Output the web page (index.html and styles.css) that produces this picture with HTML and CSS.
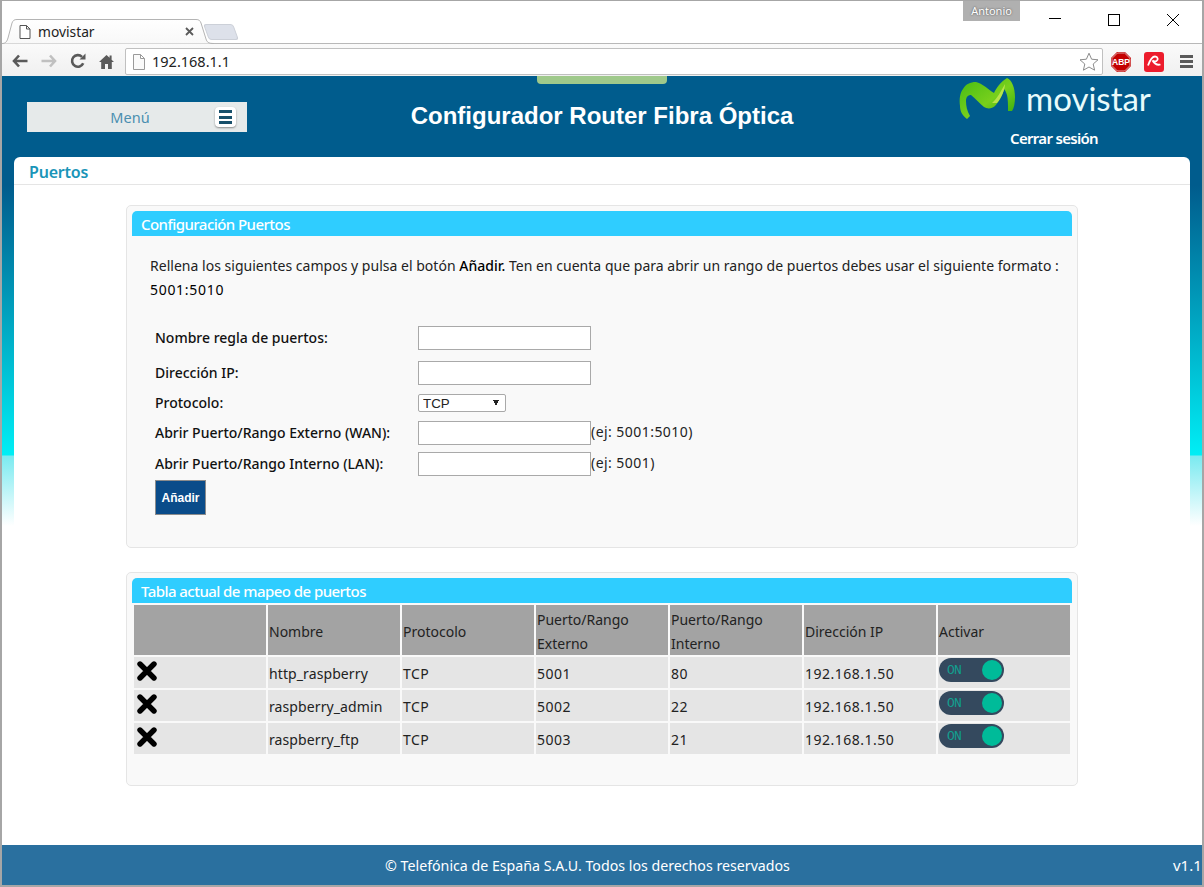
FILE: index.html
```html
<!DOCTYPE html>
<html lang="es">
    <head>
        <meta charset="UTF-8">
        <title>movistar</title>
        <link rel="stylesheet" href="styles.css">
    </head>
    <body>
        <div class="tabstrip">
            <div class="tab">
                <svg class="tab-shape" width="212" height="25" viewBox="0 0 212 25">
                    <defs>
                        <linearGradient id="tabfill" x1="0" y1="0" x2="0" y2="1">
                            <stop offset="0" stop-color="#ffffff"/>
                            <stop offset="1" stop-color="#f8f8f8"/>
                        </linearGradient>
                    </defs>
                    <path d="M0 24.5 C4 24.5 5 22 6 19 L10 4 C11 1.5 12 .5 15 .5 L194 .5 C197 .5 198 1.5 199 4 L204 20 C205 23 206 24.5 212 24.5" fill="url(#tabfill)" stroke="#b4b4b4"/>
                </svg>
                <svg class="tab-page" width="12" height="14" viewBox="0 0 12 14">
                    <path d="M1 .5H7.5L11 4V13.5H1Z M7.5 .5V4H11" fill="#fff" stroke="#555"/>
                </svg>
                <span class="tab-title">movistar</span>
                <svg class="tab-close" width="9" height="9" viewBox="0 0 9 9">
                    <path d="M1 1L8 8M8 1L1 8" stroke="#5a5a5a" stroke-width="1.8"/>
                </svg>
            </div>
            <div class="newtab"></div>
            <div class="profile">Antonio</div>
            <div class="winbtns">
                <svg width="14" height="14" viewBox="0 0 14 14"><path d="M1 5.5H13" stroke="#000"/></svg>
                <svg width="14" height="14" viewBox="0 0 14 14"><rect x="1.5" y="1.5" width="11" height="11" fill="none" stroke="#000"/></svg>
                <svg width="14" height="14" viewBox="0 0 14 14"><path d="M1 1L13 13M13 1L1 13" stroke="#000"/></svg>
            </div>
        </div>

        <div class="toolbar">
            <svg class="nav-icon" width="16" height="14" viewBox="0 0 16 14"><path d="M7 1.5L2 7L7 12.5M2.5 7H15.5" fill="none" stroke="#5a5a5a" stroke-width="2.6"/></svg>
            <svg class="nav-icon" width="16" height="14" viewBox="0 0 16 14"><path d="M9 1.5L14 7L9 12.5M13.5 7H.5" fill="none" stroke="#c0c0c0" stroke-width="2.6"/></svg>
            <svg class="nav-icon" width="16" height="16" viewBox="0 0 16 16"><path d="M13.2 10.2A5.8 5.8 0 1 1 12 3.8" fill="none" stroke="#5a5a5a" stroke-width="2.6"/><path d="M9.5 6.5H15.5V.5Z" fill="#5a5a5a"/></svg>
            <svg class="nav-icon" width="15" height="15" viewBox="0 0 15 15"><path d="M7.5 1L0 8H2.2V15H6V10H9V15H12.8V8H15L12.6 5.7V1.5H10.6V3.8Z" fill="#5a5a5a"/></svg>
            <div class="omnibox">
                <svg class="omni-page" width="12" height="16" viewBox="0 0 12 16"><path d="M.5 .5H7.5L11.5 4.5V15.5H.5Z M7.5 .5V4.5H11.5" fill="#fafafa" stroke="#9a9a9a"/></svg>
                <span class="url">192.168.1.1</span>
                <svg class="star" width="20" height="19" viewBox="0 0 20 19"><path d="M10 1.2L12.6 7.2L19 7.8L14.2 12L15.6 18.2L10 15L4.4 18.2L5.8 12L1 7.8L7.4 7.2Z" fill="#fff" stroke="#8c8c8c"/></svg>
            </div>
            <svg class="ext" width="20" height="20" viewBox="0 0 20 20">
                <path d="M6 0H14L20 6V14L14 20H6L0 14V6Z" fill="#c40000"/>
                <path d="M6.4 1H13.6L19 6.4V13.6L13.6 19H6.4L1 13.6V6.4Z" fill="#c40000" stroke="#e8e8e8" stroke-width=".7"/>
                <text x="10" y="13" class="abp">ABP</text>
            </svg>
            <svg class="ext" width="20" height="20" viewBox="0 0 20 20">
                <rect width="20" height="20" rx="3" fill="#ec1c2c"/>
                <path d="M4 13.5C6 8 8 4.5 11 4.5C14 4.5 14.5 8 12.5 9C11 9.8 9.5 9.5 8.5 8.5C10 11 13 13.5 16.5 12.5" fill="none" stroke="#fff" stroke-width="1.8"/>
            </svg>
            <div class="chrome-menu"><i></i><i></i><i></i></div>
        </div>

        <div class="page">
            <header class="top">
                <div class="top-tab"></div>
                <div class="menu">
                    <span class="menu-label">Menú</span>
                    <span class="menu-btn"><i></i><i></i><i></i></span>
                </div>
                <h1>Configurador Router Fibra Óptica</h1>
                <div class="brand">
                    <div class="logo">
                        <svg width="62" height="44" viewBox="0 0 62 44">
                            <defs>
                                <linearGradient id="mgreen" x1="0" y1="0" x2="1" y2="1">
                                    <stop offset="0" stop-color="#45bb14"/>
                                    <stop offset=".55" stop-color="#78d01c"/>
                                    <stop offset="1" stop-color="#2fa80c"/>
                                </linearGradient>
                            </defs>
                            <path d="M9 42C4 38 2 34 2 29C1 22 2 16 5 12C8 7 12 5 18 5C24 6 31 13 36 16C38 12 42 5 49 1C54 3 57 11 57 20C57 26 56 31 54 34L50 34C50 28 50 22 49 18C48 15 47 13 46 12C45 17 41 25 37 29C34 32 29 32 26 30C22 27 17 21 13 18C10 18 8 20 8 24C8 29 9 34 12 39Z" fill="url(#mgreen)"/>
                            <path d="M34 26C39 22 43 14 47 7C47 12 44 20 39 26Z" fill="#b8e34a"/>
                        </svg>
                        <span class="wordmark">movistar</span>
                    </div>
                    <a class="logout">Cerrar sesión</a>
                </div>
            </header>

            <main class="content">
                <h2 class="page-title">Puertos</h2>

                <section class="card card-form">
                    <h3 class="card-title">Configuración Puertos</h3>
                    <p class="intro">Rellena los siguientes campos y pulsa el botón <b>Añadir.</b> Ten en cuenta que para abrir un rango de puertos debes usar el siguiente formato :<br><b class="plain">5001:5010</b></p>
                    <form class="port-form">
                        <label class="tall">Nombre regla de puertos:</label>
                        <div><input type="text"></div>
                        <label class="tall">Dirección IP:</label>
                        <div><input type="text"></div>
                        <label class="short">Protocolo:</label>
                        <div>
                            <select>
                                <option>TCP</option>
                                <option>UDP</option>
                            </select>
                        </div>
                        <label class="tall">Abrir Puerto/Rango Externo (WAN):</label>
                        <div class="with-hint"><input type="text"><span>(ej: 5001:5010)</span></div>
                        <label class="tall">Abrir Puerto/Rango Interno (LAN):</label>
                        <div class="with-hint"><input type="text"><span>(ej: 5001)</span></div>
                        <input class="add" type="button" value="Añadir">
                    </form>
                </section>

                <section class="card card-table">
                    <h3 class="card-title">Tabla actual de mapeo de puertos</h3>
                    <table class="ports">
                        <thead>
                            <tr>
                                <th></th>
                                <th>Nombre</th>
                                <th>Protocolo</th>
                                <th>Puerto/Rango Externo</th>
                                <th>Puerto/Rango Interno</th>
                                <th>Dirección IP</th>
                                <th>Activar</th>
                            </tr>
                        </thead>
                        <tbody>
                            <tr>
                                <td class="cell-top"><svg class="del" width="20" height="20" viewBox="0 0 20 20"><path d="M3 3L17 17M17 3L3 17" stroke="#000" stroke-width="5.4" stroke-linecap="round"/></svg></td>
                                <td>http_raspberry</td>
                                <td>TCP</td>
                                <td>5001</td>
                                <td>80</td>
                                <td>192.168.1.50</td>
                                <td class="cell-top"><span class="toggle"><span class="toggle-on">ON</span><i></i></span></td>
                            </tr>
                            <tr>
                                <td class="cell-top"><svg class="del" width="20" height="20" viewBox="0 0 20 20"><path d="M3 3L17 17M17 3L3 17" stroke="#000" stroke-width="5.4" stroke-linecap="round"/></svg></td>
                                <td>raspberry_admin</td>
                                <td>TCP</td>
                                <td>5002</td>
                                <td>22</td>
                                <td>192.168.1.50</td>
                                <td class="cell-top"><span class="toggle"><span class="toggle-on">ON</span><i></i></span></td>
                            </tr>
                            <tr>
                                <td class="cell-top"><svg class="del" width="20" height="20" viewBox="0 0 20 20"><path d="M3 3L17 17M17 3L3 17" stroke="#000" stroke-width="5.4" stroke-linecap="round"/></svg></td>
                                <td>raspberry_ftp</td>
                                <td>TCP</td>
                                <td>5003</td>
                                <td>21</td>
                                <td>192.168.1.50</td>
                                <td class="cell-top"><span class="toggle"><span class="toggle-on">ON</span><i></i></span></td>
                            </tr>
                        </tbody>
                    </table>
                </section>
            </main>

            <footer class="bottom">
                <span class="copy">© Telefónica de España S.A.U. Todos los derechos reservados</span>
                <span class="version">v1.1</span>
            </footer>
        </div>
    </body>
</html>
```

FILE: styles.css
```css
* {
    box-sizing: border-box;
}

html, body {
    height: 100%;
}

body {
    margin: 0;
    height: 887px;
    overflow: hidden;
    display: flex;
    flex-direction: column;
    background-color: #fff;
    border: 2px solid #a6a6a6;
    border-top-width: 1px;
    font-family: "Noto Sans", Arial, sans-serif;
    font-size: 14px;
    color: #222;
}

/* browser window */
.tabstrip {
    height: 43px;
    flex: none;
    display: flex;
    align-items: flex-end;
    border-bottom: 1px solid #b8b8b8;
    position: relative;
}

.tab {
    position: relative;
    width: 212px;
    height: 25px;
    margin-bottom: -1px;
    display: flex;
    align-items: center;
    padding: 0 20px 0 17px;
}

.tab-shape {
    position: absolute;
    left: 0;
    top: 0;
}

.tab-page, .tab-title, .tab-close {
    position: relative;
}

.tab-title {
    margin-left: 7px;
    flex: 1;
    font-size: 13.8px;
    color: #222;
}

.newtab {
    width: 30px;
    height: 16px;
    margin-left: -8px;
    margin-bottom: 3px;
    background-color: #dde1ea;
    border: 1px solid #ccd0d8;
    border-radius: 3px;
    transform: skewX(20deg);
}

.profile {
    position: absolute;
    left: 961px;
    top: 0;
    width: 57px;
    height: 20px;
    background-color: #b0b0b0;
    color: #fff;
    font-size: 11px;
    line-height: 20px;
    text-align: center;
    text-shadow: 0 0 2px #444;
}

.winbtns {
    position: absolute;
    right: 22px;
    top: 12px;
    display: flex;
    gap: 45px;
}

.toolbar {
    height: 32px;
    flex: none;
    display: flex;
    align-items: center;
    padding-left: 10px;
    background: linear-gradient(#fafafa, #f0f0f0);
}

.nav-icon {
    margin-right: 13px;
    margin-top: 2px;
}

.nav-icon:nth-child(4) {
    margin-right: 11px;
}

.omnibox {
    width: 978px;
    height: 27px;
    margin-top: 3px;
    display: flex;
    align-items: center;
    padding-left: 7px;
    background-color: #fff;
    border: 1px solid #c0c0c0;
    border-radius: 2px;
}

.url {
    margin-left: 7px;
    margin-top: -2px;
    flex: 1;
    font-size: 14.5px;
    color: #222;
}

.star {
    margin-right: 3px;
}

.toolbar > .ext {
    margin-left: 8px;
    margin-top: 3px;
}

.toolbar > .ext + .ext {
    margin-left: 13px;
}

.abp {
    font-family: "Liberation Sans", Arial, sans-serif;
    font-size: 8.5px;
    font-weight: bold;
    fill: #fff;
    text-anchor: middle;
}

.chrome-menu {
    margin-left: 16px;
    margin-top: 3px;
    width: 13px;
    display: flex;
    flex-direction: column;
    gap: 2px;
}

.chrome-menu i {
    height: 3px;
    background-color: #5a5a5a;
}

/* router page */
.page {
    flex: 1;
    display: flex;
    flex-direction: column;
    min-height: 0;
    background: linear-gradient(#005c8d 0, #005c8d 110px, #00eef5 379px, #7aeaf0 380px, #ffffff 450px);
}

.top {
    position: relative;
    height: 81px;
    flex: none;
    display: grid;
    grid-template-columns: 1fr auto 1fr;
    background-color: #005c8d;
}

.top-tab {
    position: absolute;
    left: 535px;
    top: 0;
    width: 130px;
    height: 8px;
    background-color: #9fc98b;
    border-radius: 0 0 4px 4px;
}

.menu {
    width: 220px;
    height: 30px;
    margin: 26px 0 0 25px;
    display: flex;
    align-items: center;
    background-color: #e6eaea;
}

.menu-label {
    width: 206px;
    margin-right: -18px;
    text-align: center;
    font-size: 14.5px;
    color: #4a8fb0;
}

.menu-btn {
    width: 21px;
    height: 20px;
    padding: 3px 4px;
    display: flex;
    flex-direction: column;
    justify-content: space-between;
    background-color: #fff;
    border-radius: 4px;
    box-shadow: 0 1px 2px rgba(0, 0, 0, 0.4);
}

.menu-btn i {
    height: 3px;
    background-color: #17506b;
}

.top h1 {
    margin: 25px 0 0;
    font-family: "Liberation Sans", Arial, sans-serif;
    font-size: 24px;
    line-height: 30px;
    font-weight: bold;
    color: #fff;
}

.brand {
    justify-self: end;
    width: 244px;
    padding-top: 1px;
}

.logo {
    display: flex;
    align-items: center;
    height: 44px;
}

.wordmark {
    margin-left: 6px;
    margin-top: -2px;
    font-family: Lato, sans-serif;
    font-size: 33px;
    line-height: 44px;
    color: #e8fbfb;
}

.logout {
    display: block;
    width: 192px;
    margin-top: 6px;
    text-align: center;
    font-size: 15px;
    letter-spacing: -0.7px;
    line-height: 22px;
    font-weight: 600;
    color: #fff;
}

.content {
    flex: 1;
    margin: 0 12px;
    background-color: #fff;
    border-radius: 6px 6px 0 0;
}

.page-title {
    margin: 0 0 20px;
    height: 28px;
    padding-left: 15px;
    border-bottom: 1px solid #e5e5e5;
    font-size: 16px;
    line-height: 31px;
    font-weight: 600;
    letter-spacing: -0.2px;
    color: #1a95b8;
}

.card {
    width: 952px;
    margin: 0 auto 24px;
    padding: 5px;
    background-color: #f9f9f9;
    border: 1px solid #e5e5e5;
    border-radius: 5px;
}

.card-title {
    margin: 0;
    height: 25px;
    padding-left: 9px;
    background-color: #2fcdff;
    border-radius: 5px 5px 0 0;
    font-size: 15px;
    letter-spacing: -0.55px;
    line-height: 27px;
    font-weight: 500;
    color: #fff;
}

.intro {
    margin: 18px 0 24px 18px;
    line-height: 24px;
    letter-spacing: 0.02px;
}

.intro b {
    font-weight: 500;
    color: #000;
}

.intro .plain {
    font-weight: normal;
    letter-spacing: 0.7px;
}

.port-form {
    margin-left: 23px;
    padding-bottom: 27px;
    display: grid;
    grid-template-columns: 263px 1fr;
    grid-template-rows: 35px 33px 27px 31px 28px 35px;
}

.port-form label {
    font-weight: 500;
    color: #111;
}

.tall {
    line-height: 24px;
}

.short {
    line-height: 18px;
}

.port-form input[type="text"] {
    width: 173px;
    height: 24px;
    padding: 1px 2px;
    background-color: #fff;
    border: 1px solid #a9a9a9;
}

.port-form select {
    width: 88px;
    height: 18px;
    padding: 0 4px;
    appearance: none;
    display: block;
    background-color: #fff;
    background-image: linear-gradient(to top right, transparent 50%, #222 50%), linear-gradient(to top left, transparent 50%, #222 50%);
    background-size: 3px 6px;
    background-position: 74px 5px, 77px 5px;
    background-repeat: no-repeat;
    border: 1px solid #a9a9a9;
    border-radius: 2px;
    font-family: "Liberation Sans", Arial, sans-serif;
    font-size: 13.33px;
    color: #222;
}

.with-hint {
    display: flex;
    line-height: 22px;
    letter-spacing: 0.45px;
}

.add {
    width: 51px;
    height: 35px;
    padding: 0;
    background-color: #0a4c8a;
    border: 1px solid #8c8c8c;
    font-family: "Liberation Sans", Arial, sans-serif;
    font-size: 12px;
    font-weight: bold;
    color: #fff;
}

.card-table {
    padding-bottom: 29px;
}

.ports {
    width: 940px;
    table-layout: fixed;
    border-spacing: 2px;
}

.ports th, .ports td {
    padding: 1px;
    line-height: 24px;
    text-align: left;
    font-weight: normal;
}

.ports th {
    height: 50px;
    padding-top: 3px;
    padding-bottom: 0;
    line-height: 23.5px;
    background-color: #a3a3a3;
}

.ports td {
    height: 31px;
    padding-top: 4px;
    background-color: #e5e5e5;
}

.ports td:nth-child(2) {
    letter-spacing: 0.1px;
}

.ports td:nth-child(n+3) {
    letter-spacing: 0.5px;
}

.ports td.cell-top {
    padding-top: 1px;
    vertical-align: top;
}

.del {
    display: block;
    margin: 3px 0 0 2px;
}

.toggle {
    display: block;
    position: relative;
    width: 65px;
    height: 24px;
    background-color: #34495e;
    border-radius: 12px;
}

.toggle i {
    position: absolute;
    right: 2px;
    top: 2px;
    width: 20px;
    height: 20px;
    background-color: #00bb99;
    border-radius: 50%;
}

.toggle-on {
    display: block;
    padding-left: 8px;
    font-family: "Liberation Mono", monospace;
    font-size: 13px;
    letter-spacing: -0.7px;
    line-height: 26px;
    color: #12a090;
}

.bottom {
    height: 40px;
    flex: none;
    display: flex;
    align-items: center;
    background-color: #2a709f;
    color: #fff;
}

.copy {
    flex: 1;
    text-align: center;
    font-size: 14.2px;
}

.version {
    width: 29px;
    font-size: 15px;
}
```
